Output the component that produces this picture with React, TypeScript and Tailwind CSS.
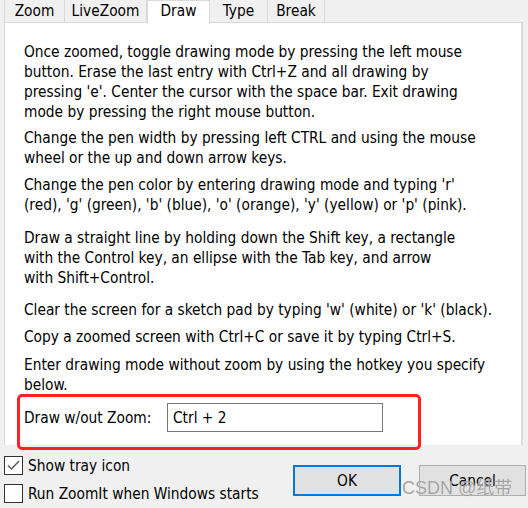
import React from "react";

const FONT = { fontFamily: '"DejaVu Sans Condensed", "DejaVu Sans", sans-serif', fontStretch: "condensed" as const };

function Tab({ label, w, selected }: { label: string; w: string; selected?: boolean }) {
  if (selected) {
    return (
      <div className={`${w} h-[24px] -mb-[1px] relative z-10 bg-white border-l border-r border-t border-[#d9d9d9] flex items-start justify-center pt-[0px] text-[#000]`}>
        {label}
      </div>
    );
  }
  return (
    <div className={`${w} h-[22px] mt-[0px] bg-[#f0f0f0] border-r border-[#d9d9d9] flex items-center justify-center text-[#000]`}>
      {label}
    </div>
  );
}

export default function App() {
  return (
    <div className="relative w-[528px] h-[508px] overflow-hidden bg-[#f0f0f0] text-[15.3px] leading-[20px] text-black" style={FONT}>
      {/* tabs */}
      <div className="flex items-start pl-[4px] h-[22px]">
        <div className="w-[61px] h-[22px] border-l border-r border-[#d9d9d9] flex items-center justify-center">Zoom</div>
        <div className="w-[82px] h-[22px] border-r border-[#d9d9d9] flex items-center justify-center">LiveZoom</div>
        <Tab label="Draw" w="w-[63px]" selected />
        <Tab label="Type" w="w-[58px]" />
        <Tab label="Break" w="w-[57px]" />
      </div>

      {/* panel */}
      <div className="ml-[4px] w-[519px] h-[423px] bg-white border-l border-t border-[#d9d9d9] border-r-2 border-r-[#dadada] pl-[19px] pt-[19px]">
        <p className="whitespace-nowrap">
          Once zoomed, toggle drawing mode by pressing the left mouse<br />
          button. Erase the last entry with Ctrl+Z and all drawing by<br />
          pressing 'e'. Center the cursor with the space bar. Exit drawing<br />
          mode by pressing the right mouse button.
        </p>
        <p className="whitespace-nowrap mt-[6px]">
          Change the pen width by pressing left CTRL and using the mouse<br />
          wheel or the up and down arrow keys.
        </p>
        <p className="whitespace-nowrap mt-[7px]">
          Change the pen color by entering drawing mode and typing 'r'<br />
          (red), 'g' (green), 'b' (blue), 'o' (orange), 'y' (yellow) or 'p' (pink).
        </p>
        <p className="whitespace-nowrap mt-[13px]">
          Draw a straight line by holding down the Shift key, a rectangle<br />
          with the Control key, an ellipse with the Tab key, and arrow<br />
          with Shift+Control.
        </p>
        <p className="whitespace-nowrap mt-[12px]">
          Clear the screen for a sketch pad by typing 'w' (white) or 'k' (black).
        </p>
        <p className="whitespace-nowrap mt-[7px]">
          Copy a zoomed screen with Ctrl+C or save it by typing Ctrl+S.
        </p>
        <p className="whitespace-nowrap mt-[8px]">
          Enter drawing mode without zoom by using the hotkey you specify<br />
          below.
        </p>
        <div className="mt-[8px] flex items-center h-[29px]">
          <span className="w-[143px] whitespace-nowrap">Draw w/out Zoom:</span>
          <div className="w-[216px] h-[29px] border border-[#7a7a7a] bg-white flex items-center pl-[5px]">
            Ctrl + 2
          </div>
        </div>
      </div>

      {/* red annotation box */}
      <div className="absolute left-[17px] top-[394px] w-[404px] h-[56px] border-[3px] border-[#ff2222] rounded-[5px]" />

      {/* bottom */}
      <div className="flex justify-between pl-[4px] pt-[11px]">
        <div className="flex flex-col gap-[9px]">
          <label className="flex items-center gap-[5px] h-[19px] whitespace-nowrap">
            <span className="w-[19px] h-[19px] border border-[#333333] bg-white flex items-center justify-center">
              <svg width="15" height="15" viewBox="0 0 15 15">
                <path d="M2 7.5 L5.5 11 L13 3" fill="none" stroke="#555" strokeWidth="1.4" />
              </svg>
            </span>
            Show tray icon
          </label>
          <label className="flex items-center gap-[5px] h-[19px] whitespace-nowrap">
            <span className="w-[19px] h-[19px] border border-[#333333] bg-white" />
            Run ZoomIt when Windows starts
          </label>
        </div>
        <div className="flex gap-[18px] pt-[9px] pr-[2px]">
          <div className="w-[108px] h-[31px] border-2 border-[#0078d7] bg-[#e1e1e1] flex items-center justify-center">OK</div>
          <div className="w-[107px] h-[31px] border border-[#adadad] bg-[#e1e1e1] flex items-center justify-center">Cancel</div>
        </div>
      </div>

      {/* watermark */}
      <div
        className="absolute left-[402px] top-[477px] text-[18px] leading-[22px] text-[#9c9c9c] whitespace-nowrap opacity-90"
        style={{ fontFamily: '"Liberation Sans", "Noto Sans CJK SC", sans-serif', textShadow: "0 0 1px #fff" }}
      >
        CSDN @纸带
      </div>
    </div>
  );
}
